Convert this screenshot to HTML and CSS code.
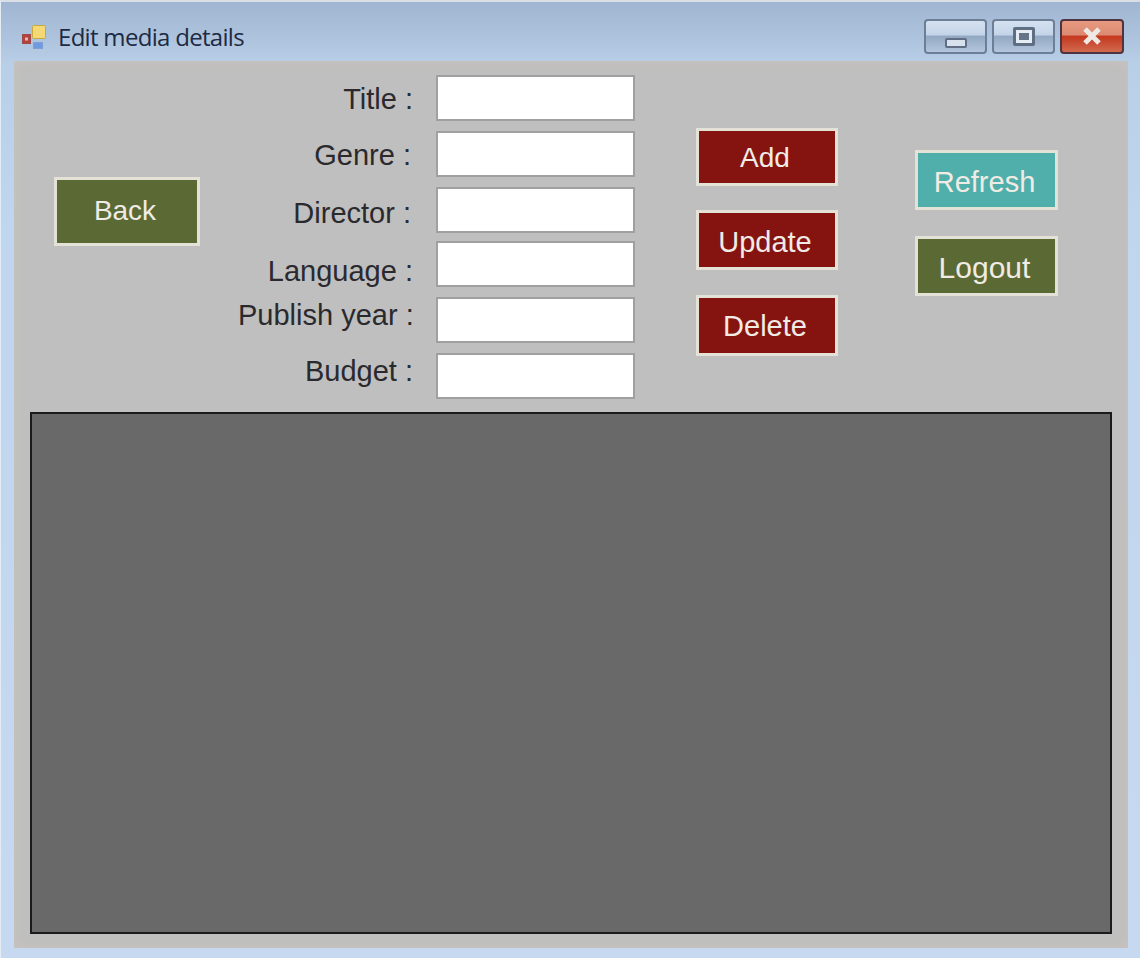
FILE: index.html
```html
<!DOCTYPE html>
<html lang="en">
<head>
<meta charset="utf-8">
<title>Edit media details</title>
<link rel="stylesheet" href="styles.css">
</head>
<body>
<div class="window">
  <header class="titlebar">
    <svg class="app-icon" width="28" height="28" viewBox="0 0 28 28">
      <rect x="2.5" y="10.5" width="8" height="9" fill="#b5403f" stroke="#9c4a4a"/>
      <rect x="5" y="13.5" width="3" height="3" fill="#e9b5b0"/>
      <rect x="12.5" y="1.5" width="13" height="13" rx="1" fill="#f3d873" stroke="#c9a93f"/>
      <rect x="13.5" y="18.5" width="9" height="6" fill="#6f9ae0" stroke="#7f9fd4"/>
    </svg>
    <span class="title">Edit media details</span>
    <div class="captions">
      <div class="cap cap-min"><span class="glyph-min"></span></div>
      <div class="cap cap-max"><span class="glyph-max"></span></div>
      <div class="cap cap-close">
        <svg width="24" height="18" viewBox="0 0 24 18"><path d="M5 2 L19 16 M19 2 L5 16" stroke="#efe9e6" stroke-width="5"/></svg>
      </div>
    </div>
  </header>
  <main class="client">
    <section class="controls">
      <div class="back-col"><button class="btn btn-olive btn-back">Back</button></div>
      <div class="form">
        <label class="lbl lbl-title">Title :</label><input class="field" type="text">
        <label class="lbl lbl-genre">Genre :</label><input class="field" type="text">
        <label class="lbl lbl-director">Director :</label><input class="field" type="text">
        <label class="lbl lbl-language">Language :</label><input class="field" type="text">
        <label class="lbl lbl-year">Publish year :</label><input class="field" type="text">
        <label class="lbl lbl-budget">Budget :</label><input class="field" type="text">
      </div>
      <div class="actions">
        <button class="btn btn-red btn-add">Add</button>
        <button class="btn btn-red btn-update">Update</button>
        <button class="btn btn-red btn-delete">Delete</button>
      </div>
      <div class="side">
        <button class="btn btn-teal btn-refresh">Refresh</button>
        <button class="btn btn-olive btn-logout">Logout</button>
      </div>
    </section>
    <div class="grid-view"></div>
  </main>
</div>
</body>
</html>
```
FILE: styles.css
```css
* { box-sizing: border-box; }
html, body { margin: 0; padding: 0; }
body { width: 1140px; height: 958px; overflow: hidden; background: #c3d6ec; }
.window {
  width: 1140px; height: 958px;
  display: flex; flex-direction: column;
  padding: 1px 12px 10px 13px;
  background: linear-gradient(180deg, #9fb5d1 0, #abc1db 30px, #b9cfe8 62px, #c0d5ee 220px, #c6d9f0 100%);
  border-top: 2px solid #d9dfe5;
  border-left: 1px solid #e4ecf5;
  font-family: "Liberation Sans", Arial, sans-serif;
}
.titlebar { height: 58px; display: flex; align-items: center; flex: none; padding: 8px 4px 0 5px; }
.app-icon { flex: none; margin-top: 4px; margin-left: 1px; }
.title { margin-left: 10px; margin-top: 1px; font: 24px "Open Sans", "Noto Sans", sans-serif; color: #1d2a42; letter-spacing: -0.7px; }
.captions { margin-left: auto; display: flex; gap: 5px; }
.cap {
  height: 35px; border: 2px solid #6d7e97; border-radius: 4px;
  display: flex; align-items: center; justify-content: center;
  background: linear-gradient(180deg, #d5e1f0 0, #c4d4e8 44%, #93a8c2 50%, #b3c6dd 100%);
}
.cap-min { width: 63px; padding-top: 13px; }
.cap-max { width: 63px; }
.cap-close { width: 64px; border-color: #4d3440; background: linear-gradient(180deg, #e79a80 0, #dc8a72 44%, #c4391f 50%, #d1694f 100%); }
.glyph-min { width: 22px; height: 10px; background: #d8e2ee; border: 2px solid #5f6e82; border-radius: 2px; }
.glyph-max { width: 22px; height: 19px; border: 3px solid #5f6e82; border-radius: 2px; background: #e6ecf3; box-shadow: inset 0 0 0 3px #e6ecf3, inset 0 0 0 8px #66758a; }
.client {
  flex: 1; display: flex; flex-direction: column;
  padding: 14px 17px 14px 16px;
  background: #bfbfbf;
  box-shadow: inset 0 0 12px #c9c3bc;
}
.controls { height: 337px; display: flex; flex: none; }
.back-col { width: 208px; padding: 102px 0 0 24px; flex: none; }
.btn {
  display: block; padding: 0; margin: 0;
  border: 3px solid #e4e1d6;
  font-family: "Liberation Sans", Arial, sans-serif;
  font-size: 29px; color: #f0ebe4; cursor: pointer;
}
.btn-olive { background: #5b6a35; }
.btn-red { background: #851410; }
.btn-teal { background: #50afaa; }
.btn-back { width: 146px; height: 69px; font-size: 28px; padding: 0 4px 2px 0; }
.form {
  flex: none;
  display: grid;
  grid-template-columns: 175px 199px;
  grid-template-rows: 46px 46px 44px 46px 46px 46px;
  column-gap: 23px; row-gap: 10px;
  align-content: start;
}
.lbl { font-size: 29px; line-height: 32px; color: #2a2a2e; text-align: right; white-space: nowrap; }
.lbl-title { margin-top: 8px; }
.lbl-genre { margin-top: 8px; padding-right: 2px; }
.lbl-director { margin-top: 10px; padding-right: 2px; }
.lbl-language { margin-top: 14px; }
.lbl-year { margin-top: 2px; }
.lbl-budget { margin-top: 2px; }
.field { height: 46px; width: 199px; border: 2px solid #a0a0a0; background: #fff; padding: 0; margin: 0; }
.actions { flex: none; margin-left: 61px; padding-top: 53px; display: flex; flex-direction: column; }
.actions .btn { width: 142px; padding-right: 4px; }
.btn-add { height: 58px; font-size: 28px; padding-top: 1px; }
.btn-update { height: 60px; margin-top: 24px; padding-top: 4px; }
.btn-delete { height: 61px; margin-top: 25px; padding-top: 1px; }
.side { flex: none; margin-left: 77px; padding-top: 75px; display: flex; flex-direction: column; gap: 26px; }
.side .btn { width: 143px; height: 60px; padding: 4px 4px 0 0; }
.btn-logout { font-size: 30px; }
.grid-view { width: 1082px; height: 522px; border: 2px solid #1b1b1b; background: #696969; }
```
